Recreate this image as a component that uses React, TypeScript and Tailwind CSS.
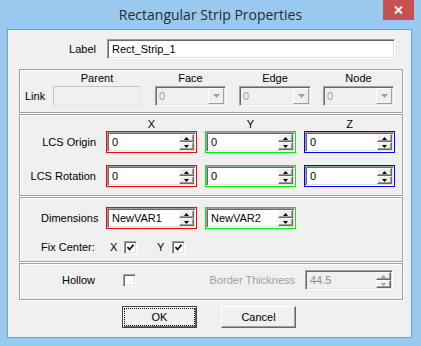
import React from "react";

const ui = "font-['Liberation_Sans',Arial,sans-serif] text-[11px] text-black";
const group =
  "ml-[11px] w-[384px] border border-[#a0a0a0] shadow-[inset_1px_1px_0_#fff,1px_1px_0_#fff]";
const sunken =
  "border border-t-[#a0a0a0] border-l-[#a0a0a0] border-b-white border-r-white shadow-[inset_1px_1px_0_#696969,inset_-1px_-1px_0_#e3e3e3] p-[1px]";

function Arrow({ up, color }: { up?: boolean; color: string }) {
  return (
    <svg width="5" height="3" viewBox="0 0 5 3">
      <path d={up ? "M2.5 0 L5 3 L0 3Z" : "M0 0 L5 0 L2.5 3Z"} fill={color} />
    </svg>
  );
}

function SpinButtons({ disabled }: { disabled?: boolean }) {
  const c = disabled ? "#a0a0a0" : "#000";
  const half =
    "flex h-[8px] items-center justify-center border border-t-white border-l-white border-b-[#696969] border-r-[#696969] bg-[#f0f0f0] shadow-[inset_-1px_-1px_0_#a0a0a0]";
  return (
    <div className="flex w-[15px] flex-col">
      <div className={half}>
        <Arrow up color={c} />
      </div>
      <div className={half}>
        <Arrow color={c} />
      </div>
    </div>
  );
}

function SpinBox({ value, frame }: { value: string; frame: string }) {
  return (
    <div className={`flex h-[22px] w-[91px] border ${frame}`}>
      <div className={`flex flex-1 bg-white ${sunken}`}>
        <span className="flex-1 pl-[3px] leading-[16px]">{value}</span>
        <SpinButtons />
      </div>
    </div>
  );
}

function Combo() {
  return (
    <div className={`flex h-[20px] w-full bg-[#f0f0f0] ${sunken}`}>
      <span className="flex-1 pl-[2px] leading-[16px] text-[#a0a0a0]">0</span>
      <div className="flex w-[16px] items-center justify-center border border-t-white border-l-white border-b-[#a0a0a0] border-r-[#a0a0a0] bg-[#f0f0f0]">
        <svg width="7" height="4" viewBox="0 0 7 4">
          <path d="M0 0 L7 0 L3.5 4Z" fill="#a0a0a0" />
        </svg>
      </div>
    </div>
  );
}

function Check({ checked }: { checked?: boolean }) {
  return (
    <div
      className={`flex h-[13px] w-[13px] items-center justify-center bg-white border border-t-[#a0a0a0] border-l-[#a0a0a0] border-b-white border-r-white shadow-[inset_1px_1px_0_#696969,inset_-1px_-1px_0_#e3e3e3]`}
    >
      {checked && (
        <svg width="7" height="7" viewBox="0 0 7 7">
          <path d="M0.5 3 L2.5 5.5 L6.5 0.8" stroke="#000" strokeWidth="1.7" fill="none" />
        </svg>
      )}
    </div>
  );
}

export default function App() {
  return (
    <div className={`flex h-[346px] w-[421px] flex-col bg-[#99c9ef] ${ui}`}>
      {/* title bar */}
      <div className="relative flex h-[29px] items-center justify-center">
        <span className="font-['Open_Sans','Liberation_Sans',sans-serif] text-[14px] text-[#2b2b2b]">
          Rectangular Strip Properties
        </span>
        <div className="absolute right-[7px] top-0 flex h-[20px] w-[31px] items-center justify-center bg-[#c75050]">
          <svg width="9" height="8" viewBox="0 0 9 8">
            <path d="M1 0.5 L8 7.5 M8 0.5 L1 7.5" stroke="#fff" strokeWidth="2" />
          </svg>
        </div>
      </div>

      {/* client */}
      <div className="ml-[7px] flex h-[309px] w-[405px] flex-col border border-[#6f9fcf] bg-[#f0f0f0]">
        {/* label */}
        <div className="mt-[9px] flex items-center">
          <span className="w-[88px] text-right">Label</span>
          <div className={`ml-[11px] flex h-[20px] w-[288px] bg-white ${sunken}`}>
            <span className="pl-[3px] leading-[16px]">Rect_Strip_1</span>
          </div>
        </div>

        {/* link */}
        <div className={`mt-[10px] h-[44px] ${group}`}>
          <div className="mt-[1px] flex items-end pl-[5px]">
            <span className="flex h-[20px] w-[28px] items-center">Link</span>
            <div className="flex w-[88px] flex-col items-center">
              <span className="mb-[1px] leading-[14px]">Parent</span>
              <div className="h-[20px] w-full border border-[#c4c4c4] border-b-[#e6e6e6] border-r-[#e6e6e6] bg-[#f0f0f0]" />
            </div>
            <div className="ml-[14px] flex w-[71px] flex-col items-center">
              <span className="mb-[1px] leading-[14px]">Face</span>
              <Combo />
            </div>
            <div className="ml-[13px] flex w-[72px] flex-col items-center">
              <span className="mb-[1px] leading-[14px]">Edge</span>
              <Combo />
            </div>
            <div className="ml-[12px] flex w-[71px] flex-col items-center">
              <span className="mb-[1px] leading-[14px]">Node</span>
              <Combo />
            </div>
          </div>
        </div>

        {/* LCS */}
        <div className={`mt-[1px] h-[82px] ${group}`}>
          <div className="mt-[3px] flex h-[13px] items-center pl-[86px]">
            <span className="w-[91px] text-center">X</span>
            <span className="ml-[8px] w-[91px] text-center">Y</span>
            <span className="ml-[8px] w-[91px] text-center">Z</span>
          </div>
          <div className="flex items-center">
            <span className="w-[76px] text-right">LCS Origin</span>
            <div className="ml-[10px] flex gap-[8px]">
              <SpinBox value="0" frame="border-[#ff0000]" />
              <SpinBox value="0" frame="border-[#00f000]" />
              <SpinBox value="0" frame="border-[#0000ff]" />
            </div>
          </div>
          <div className="mt-[12px] flex items-center">
            <span className="w-[76px] text-right">LCS Rotation</span>
            <div className="ml-[10px] flex gap-[8px]">
              <SpinBox value="0" frame="border-[#ff0000]" />
              <SpinBox value="0" frame="border-[#00f000]" />
              <SpinBox value="0" frame="border-[#0000ff]" />
            </div>
          </div>
        </div>

        {/* dimensions */}
        <div className={`mt-[1px] h-[65px] ${group}`}>
          <div className="mt-[9px] flex items-center pl-[21px]">
            <span className="w-[65px]">Dimensions</span>
            <SpinBox value="NewVAR1" frame="border-[#ff0000]" />
            <div className="ml-[8px]">
              <SpinBox value="NewVAR2" frame="border-[#00f000]" />
            </div>
          </div>
          <div className="mt-[10px] flex items-center pl-[21px]">
            <span className="w-[69px]">Fix Center:</span>
            <span className="w-[14px]">X</span>
            <Check checked />
            <span className="ml-[20px] w-[15px]">Y</span>
            <Check checked />
          </div>
        </div>

        {/* hollow */}
        <div className={`mt-[1px] h-[37px] ${group}`}>
          <div className="mt-[6px] flex items-center">
            <span className="w-[103px] pl-[42px]">Hollow</span>
            <Check />
            <span className="w-[169px] pr-[10px] text-right text-[#a0a0a0]">Border Thickness</span>
            <div className={`flex h-[20px] w-[88px] bg-[#f0f0f0] ${sunken}`}>
              <span className="flex-1 pl-[3px] leading-[16px] text-[#8d8d8d]">44.5</span>
              <SpinButtons disabled />
            </div>
          </div>
        </div>

        {/* buttons */}
        <div className="mt-[6px] flex">
          <button className="ml-[114px] flex h-[22px] w-[75px] items-center justify-center border border-[#404040] bg-[#f0f0f0] p-[1px] shadow-[inset_1px_1px_0_#fff,inset_-1px_-1px_0_#696969]">
            <span className="flex h-full w-full items-center justify-center border border-dotted border-black">
              OK
            </span>
          </button>
          <button className="ml-[24px] flex h-[22px] w-[75px] items-center justify-center border border-t-white border-l-white border-b-[#696969] border-r-[#696969] bg-[#f0f0f0] shadow-[inset_-1px_-1px_0_#a0a0a0]">
            Cancel
          </button>
        </div>
      </div>
    </div>
  );
}
